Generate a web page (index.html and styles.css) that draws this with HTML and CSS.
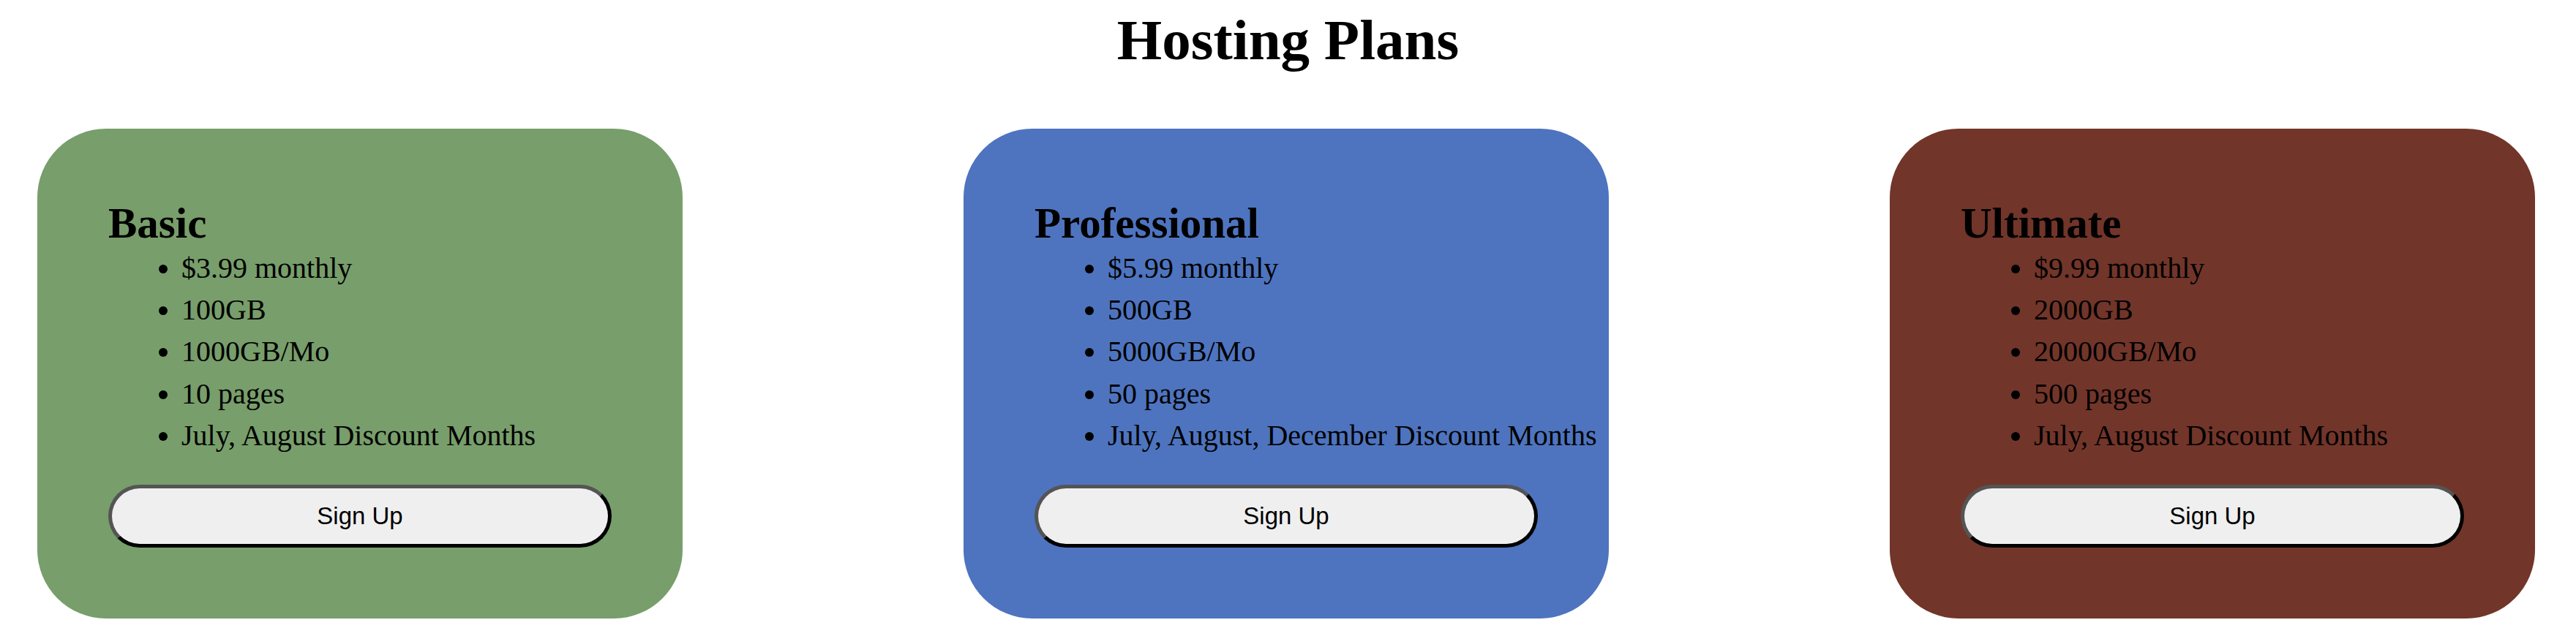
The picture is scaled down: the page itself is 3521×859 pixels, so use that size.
FILE: index.html
```html
<!DOCTYPE html>
<html lang="en">
<head>
<meta charset="utf-8">
<title>Hosting Plans</title>
<link rel="stylesheet" href="styles.css">
</head>
<body>
  <h1 class="page-title">Hosting Plans</h1>
  <div class="plans">
    <div class="plan plan-basic">
      <h2 class="plan-name">Basic</h2>
      <ul class="plan-features">
        <li>$3.99 monthly</li>
        <li>100GB</li>
        <li>1000GB/Mo</li>
        <li>10 pages</li>
        <li>July, August Discount Months</li>
      </ul>
      <button class="signup">Sign Up</button>
    </div>
    <div class="plan plan-pro">
      <h2 class="plan-name">Professional</h2>
      <ul class="plan-features">
        <li>$5.99 monthly</li>
        <li>500GB</li>
        <li>5000GB/Mo</li>
        <li>50 pages</li>
        <li>July, August, December Discount Months</li>
      </ul>
      <button class="signup">Sign Up</button>
    </div>
    <div class="plan plan-ultimate">
      <h2 class="plan-name">Ultimate</h2>
      <ul class="plan-features">
        <li>$9.99 monthly</li>
        <li>2000GB</li>
        <li>20000GB/Mo</li>
        <li>500 pages</li>
        <li>July, August Discount Months</li>
      </ul>
      <button class="signup">Sign Up</button>
    </div>
  </div>
</body>
</html>
```

FILE: styles.css
```css
html, body {
  margin: 0;
  padding: 0;
  background: #ffffff;
}

body {
  font-family: "Liberation Serif", "Times New Roman", serif;
  color: #000000;
}

.page-title {
  margin: 0;
  padding-top: 9px;
  font-size: 79px;
  line-height: 91px;
  font-weight: bold;
  text-align: center;
}

.plans {
  display: flex;
  justify-content: space-between;
  align-items: flex-start;
  margin-top: 76px;
  padding: 0 56px 0 51px;
}

.plan {
  box-sizing: border-box;
  width: 882px;
  padding: 96px 97px 97px;
  border-radius: 94px;
}

.plan-basic { background: #789e6b; }
.plan-pro { background: #4e74bf; }
.plan-ultimate { background: #72352a; }

.plan-name {
  margin: 0;
  font-size: 59px;
  line-height: 66px;
  font-weight: bold;
}

.plan-features {
  margin: 0 0 39px;
  padding-left: 100px;
  list-style: disc;
}

.plan-features li {
  font-size: 40px;
  line-height: 57.2px;
  white-space: nowrap;
}

.signup {
  display: block;
  box-sizing: border-box;
  width: 100%;
  height: 86px;
  margin: 0;
  padding: 0 20px;
  font-family: "Liberation Sans", Arial, sans-serif;
  font-size: 33px;
  color: #000000;
  background: #efefef;
  border: 5px outset #000000;
  border-radius: 43px;
}
```
